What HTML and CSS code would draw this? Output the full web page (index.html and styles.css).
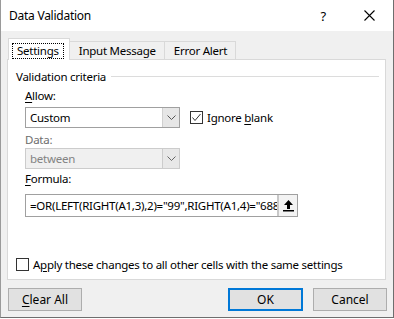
FILE: index.html
```html
<!DOCTYPE html>
<html lang="en">
<head>
    <meta charset="UTF-8" />
    <title>Data Validation</title>
    <link rel="stylesheet" href="styles.css">
</head>
<body>
    <div class="dialog">
        <div class="titlebar">
            <span class="title">Data Validation</span>
            <span class="help">?</span>
            <svg class="close" width="11" height="11" viewBox="0 0 11 11">
                <path d="M0.5 0.5 L10.5 10.5 M10.5 0.5 L0.5 10.5" stroke="#000" stroke-width="1.1" fill="none" />
            </svg>
        </div>
        <div class="content">
            <div class="tabs">
                <div class="tab active"><span class="focus">Settings</span></div>
                <div class="tab">Input Message</div>
                <div class="tab">Error Alert</div>
            </div>
            <div class="panel">
                <div class="group-title"><span>Validation criteria</span></div>
                <div class="criteria">
                    <div class="label"><u>A</u>llow:</div>
                    <div class="row">
                        <div class="combo">
                            <span class="value">Custom</span>
                            <span class="arrow">
                                <svg width="9" height="5" viewBox="0 0 9 5"><path d="M0.5 0.5 L4.5 4.5 L8.5 0.5" stroke="#555" fill="none" /></svg>
                            </span>
                        </div>
                        <label class="check">
                            <span class="box">
                                <svg width="11" height="11" viewBox="0 0 11 11"><path d="M1.5 5.5 L4 8.5 L9.5 2" stroke="#333" stroke-width="1" fill="none" /></svg>
                            </span>
                            <span>Ignore <u>b</u>lank</span>
                        </label>
                    </div>
                    <div class="label disabled">Data:</div>
                    <div class="combo off">
                        <span class="value">between</span>
                        <span class="arrow">
                            <svg width="9" height="5" viewBox="0 0 9 5"><path d="M0.5 0.5 L4.5 4.5 L8.5 0.5" stroke="#666" fill="none" /></svg>
                        </span>
                    </div>
                    <div class="label gap"><u>F</u>ormula:</div>
                    <div class="formula">
                        <div class="input">=OR(LEFT(RIGHT(A1,3),2)="99",RIGHT(A1,4)="688")</div>
                        <div class="pick">
                            <svg width="11" height="12" viewBox="0 0 11 12">
                                <path d="M5.5 0 L10 5 L7 5 L7 9 L4 9 L4 5 L1 5 Z" fill="#000" />
                                <rect x="0" y="10" width="11" height="1.5" fill="#000" />
                            </svg>
                        </div>
                    </div>
                </div>
                <label class="check apply">
                    <span class="box"></span>
                    <span>A<u>p</u>ply these changes to all other cells with the same settings</span>
                </label>
            </div>
            <div class="buttons">
                <button class="btn"><u>C</u>lear All</button>
                <span class="spacer"></span>
                <button class="btn default">OK</button>
                <button class="btn">Cancel</button>
            </div>
        </div>
    </div>
</body>
</html>
```

FILE: styles.css
```css
body {
    margin: 0;
    background-color: #ffffff;
    font-family: "Noto Sans", "Open Sans", sans-serif;
    font-size: 11.5px;
    letter-spacing: -0.25px;
    color: #000;
}

u {
    text-decoration-thickness: 1px;
    text-underline-offset: 2px;
}

.dialog {
    width: 392px;
    height: 317px;
    border-left: 1px solid #9a9a9a;
    border-right: 1px solid #6e6e6e;
    border-bottom: 1px solid #6e6e6e;
    background-color: #f0f0f0;
    display: flex;
    flex-direction: column;
}

.titlebar {
    height: 31px;
    background-color: #ffffff;
    display: flex;
    align-items: center;
    padding-left: 8px;
}

.title {
    flex: 1;
    font-size: 12px;
}

.help {
    font-size: 13px;
    margin-right: 38px;
}

.close {
    margin-right: 18px;
}

.content {
    padding: 7px 6px 0 6px;
}

.tabs {
    display: flex;
    align-items: flex-end;
    height: 21px;
    margin-left: 1px;
}

.tab {
    height: 18px;
    line-height: 17px;
    padding: 0 8px 0 9px;
    border: 1px solid #d9d9d9;
    border-bottom: none;
    border-left: none;
    box-sizing: border-box;
}

.tab.active {
    height: 22px;
    background-color: #ffffff;
    border-left: 1px solid #d9d9d9;
    padding: 3px 5px 0 3px;
    margin-bottom: -1px;
    position: relative;
}

.focus {
    display: inline-block;
    border: 1px dotted #000;
    padding: 0 4px;
    line-height: 14px;
}

.panel {
    background-color: #ffffff;
    border: 1px solid #d9d9d9;
    padding-left: 8px;
    box-sizing: border-box;
    width: 379px;
    height: 221px;
}

.group-title {
    display: flex;
    align-items: center;
    height: 16px;
    margin-top: 8px;
    margin-right: 6px;
}

.group-title::after {
    content: "";
    flex: 1;
    height: 1px;
    background-color: #dcdcdc;
    margin-left: 5px;
}

.criteria {
    padding-left: 9px;
}

.label {
    height: 16px;
    line-height: 16px;
    margin-top: 4px;
    margin-bottom: 3px;
}

.label.disabled {
    color: #6d6d6d;
    margin-bottom: 0;
}

.label.gap {
    margin-top: 2px;
    margin-bottom: 7px;
}

.row {
    display: flex;
    align-items: center;
}

.combo {
    width: 155px;
    height: 21px;
    border: 1px solid #a0a0a0;
    box-sizing: border-box;
    display: flex;
    background-color: #ffffff;
}

.combo .value {
    flex: 1;
    line-height: 19px;
    padding-left: 4px;
}

.combo .arrow {
    width: 16px;
    background-color: #e6e6e6;
    border-left: 1px solid #d0d0d0;
    display: flex;
    align-items: center;
    justify-content: center;
}

.combo.off {
    background-color: #f0f0f0;
    border-color: #cccccc;
    color: #838383;
}

.combo.off .arrow {
    background-color: #e8e8e8;
    border-left-color: #cccccc;
}

.check {
    display: flex;
    align-items: center;
    margin-left: 10px;
}

.box {
    width: 13px;
    height: 13px;
    border: 1px solid #333;
    box-sizing: border-box;
    background-color: #ffffff;
    display: flex;
    align-items: center;
    justify-content: center;
    margin-right: 4px;
}

.formula {
    display: flex;
    width: 273px;
    height: 23px;
    border: 1px solid #a0a0a0;
    box-sizing: border-box;
}

.formula .input {
    flex: 1;
    overflow: hidden;
    white-space: nowrap;
    line-height: 21px;
    padding-left: 4px;
}

.formula .pick {
    width: 18px;
    border-left: 2px solid #c8c8c8;
    background-color: #f3f3f3;
    display: flex;
    align-items: center;
    justify-content: center;
}

.apply {
    margin-left: 0;
    margin-top: 39px;
    height: 16px;
}

.buttons {
    display: flex;
    margin-top: 8px;
    margin-left: 1px;
}

.spacer {
    flex: 1;
}

.btn {
    font-family: inherit;
    font-size: 12px;
    color: #000;
    height: 23px;
    width: 74px;
    padding: 0;
    background-color: #e1e1e1;
    border: 1px solid #adadad;
    box-sizing: border-box;
}

.btn.default {
    width: 75px;
    border: 2px solid #0078d7;
    margin-right: 10px;
}
```
